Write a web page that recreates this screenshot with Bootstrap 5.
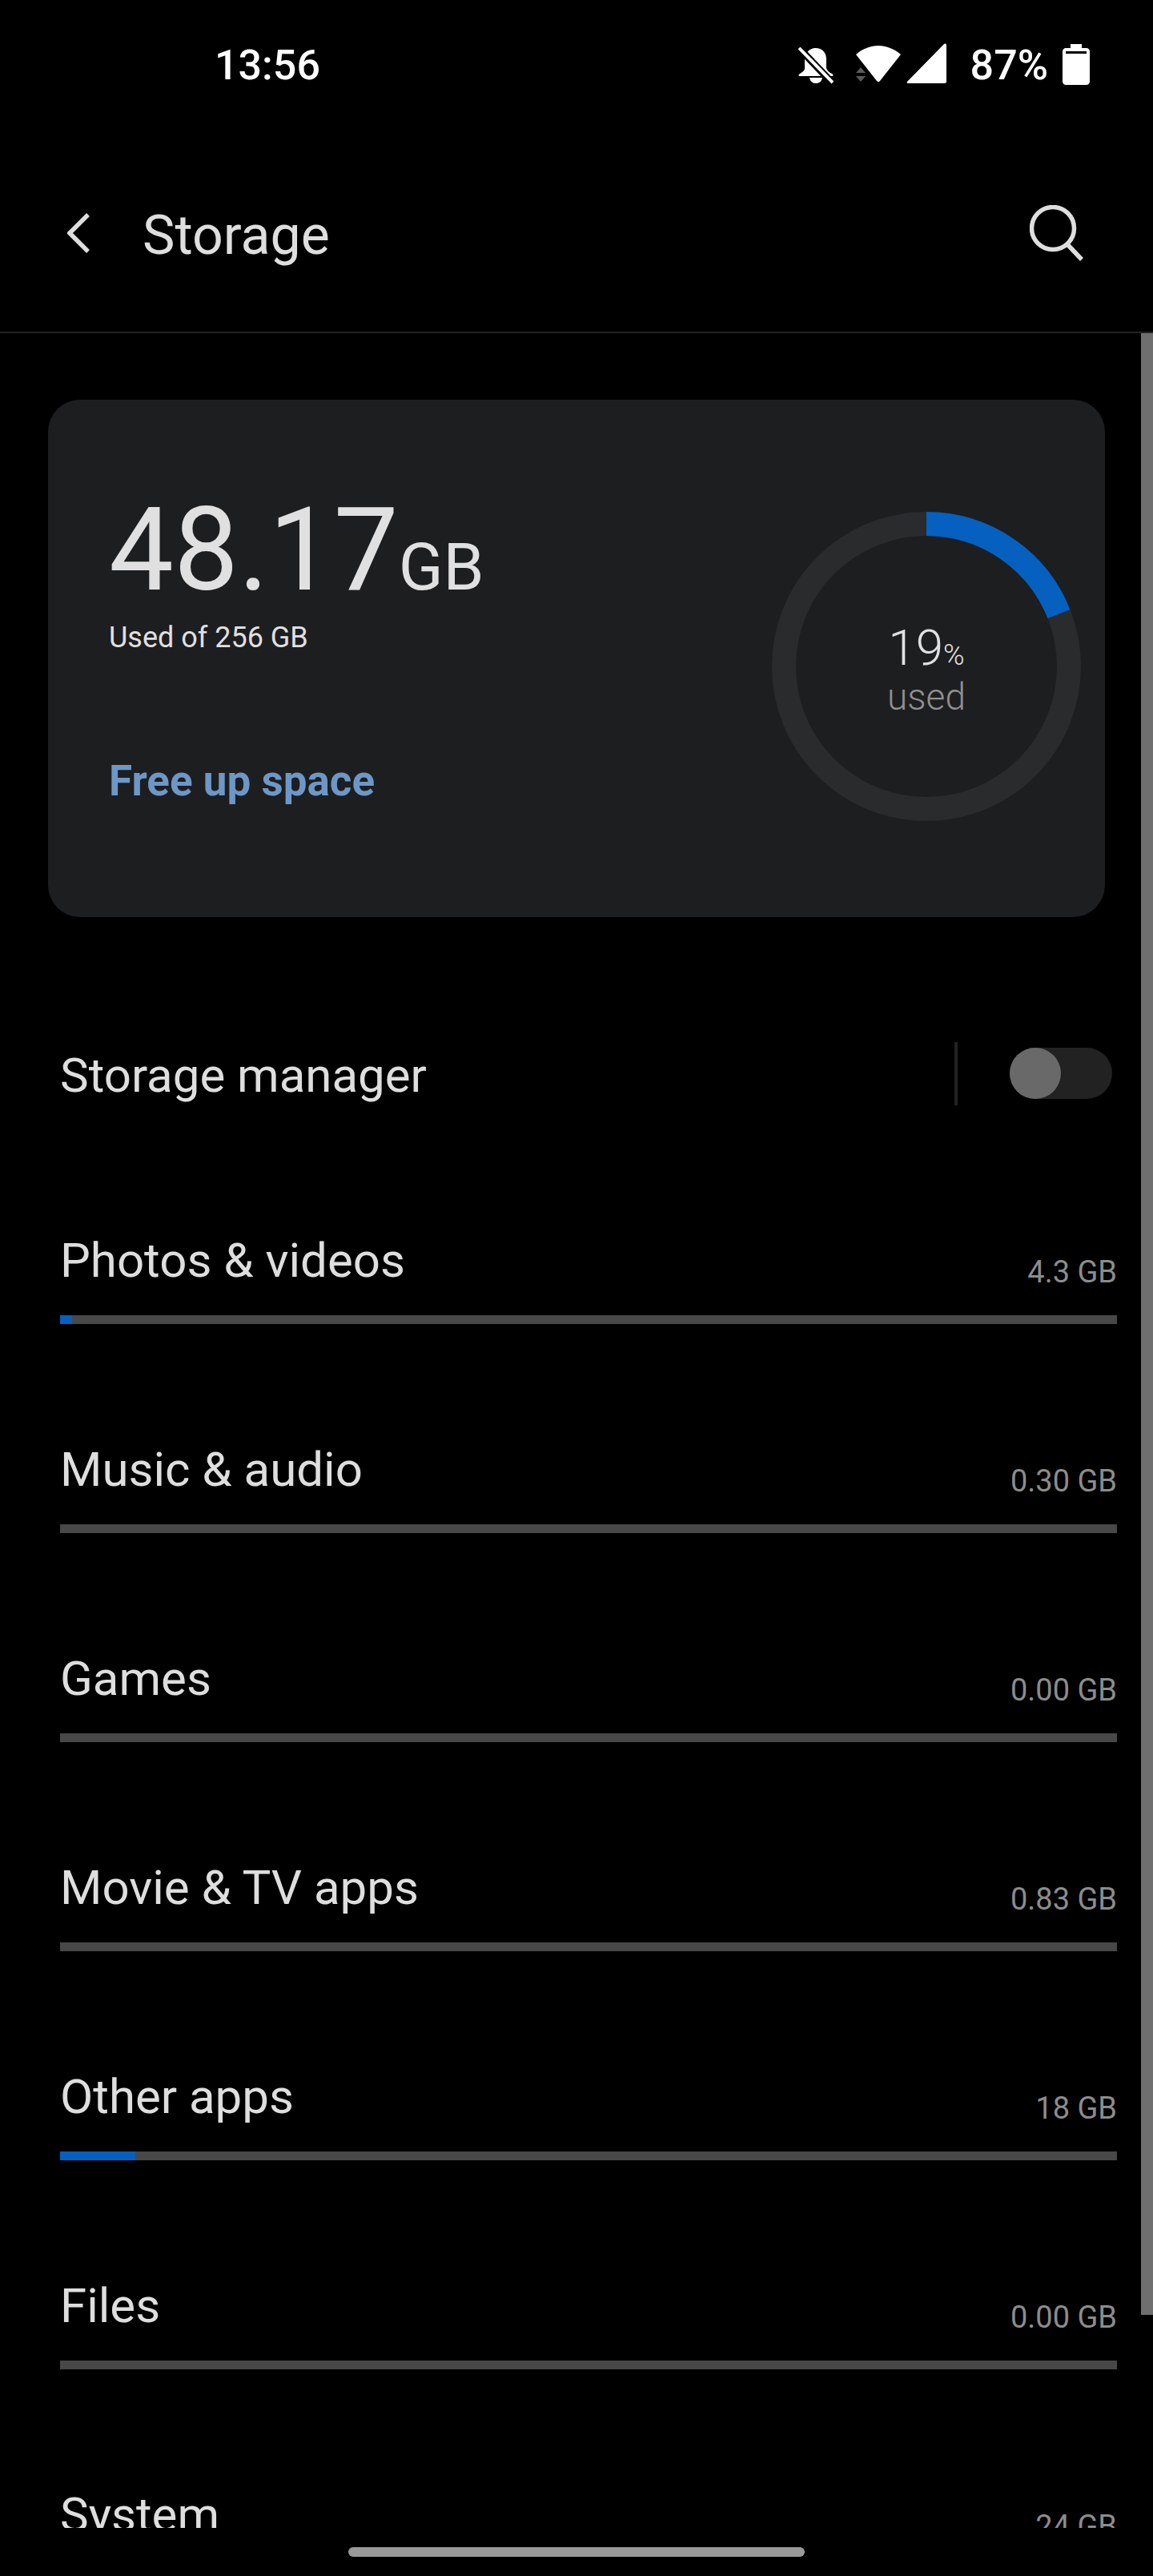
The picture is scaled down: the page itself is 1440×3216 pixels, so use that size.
<!DOCTYPE html>
<html lang="en">
<head>
  <meta charset="UTF-8">
  <title>Storage</title>
  <link href="https://cdn.jsdelivr.net/npm/bootstrap@5.3.0/dist/css/bootstrap.min.css" rel="stylesheet">
  <style>
    body { background: #000; font-family: Roboto, "Liberation Sans", sans-serif; color: #dedede; }
    .screen { height: 3216px; overflow: hidden; position: relative; background: #000; }
    .clip-area { height: 3156px; overflow: hidden; }

    .status-bar { height: 160px; padding: 54px 79px 0 268px; color: #fff; font-size: 52px; line-height: 56px; font-weight: 500; }
    .bell-icon { margin-top: 5px; }
    .wifi-icon { margin: 3px 0 0 28px; }
    .signal-icon { margin-left: 7px; }
    .status-pct { margin: 0 18px 0 30px; }
    .battery-icon { margin-top: 1px; }

    .top-bar { height: 256px; padding: 0 86px 0 84px; border-bottom: 2px solid #222; }
    .top-title { font-size: 68px; line-height: 80px; color: #dedede; margin: 14px 0 0 66px; }
    .back-icon { margin-top: 8px; }
    .search-icon { margin-top: 8px; }

    .usage-card { margin: 83px 60px 0; height: 646px; background: #1d1e20; border: 0; border-radius: 40px; color: #e0e0e0; padding: 0 30px 0 76px; }
    .big-num { font-size: 144px; line-height: 146px; font-weight: 400; margin-top: 115px; white-space: nowrap; }
    .big-unit { font-size: 82px; margin-left: 0; }
    .used-of { font-size: 36px; line-height: 44px; margin-top: -7px; }
    .free-link { font-size: 53px; line-height: 60px; font-weight: 700; color: #6d97c6; text-decoration: none; display: block; margin-top: 127px; }

    .ring-box { width: 386px; height: 386px; margin-top: 140px; }
    .ring-text { inset: 0; padding-top: 4px; }
    .ring-pct { font-size: 62px; line-height: 62px; font-weight: 300; color: #e0e0e0; }
    .ring-pct small { font-size: 36px; font-weight: 300; }
    .ring-used { font-size: 46px; line-height: 42px; font-weight: 300; color: #909090; }

    .manager-row { height: 160px; margin-top: 115px; padding: 0 51px 0 75px; }
    .row-label { font-size: 60px; line-height: 70px; color: #dedede; }
    .manager-label { margin-top: 6px; }
    .manager-div { width: 4px; height: 79px; background: #222; margin-right: 65px; }
    .toggle-track { width: 128px; height: 64px; border-radius: 32px; background: #222; }
    .toggle-knob { width: 64px; height: 64px; border-radius: 50%; background: #696969; }

    .storage-list { padding: 0 45px 0 75px; margin-top: 36px; }
    .storage-item { height: 261px; padding-top: 83px; }
    .item-value { font-size: 38px; line-height: 44px; color: #8c8c8c; position: relative; top: 1px; }
    .storage-bar { height: 11px; background: #484848; border-radius: 0; margin-top: 33px; }
    .storage-bar .progress-bar { background: #0560c0; }

    .scroll-thumb { position: absolute; top: 416px; right: 0; width: 15px; height: 2474px; background: #6f6f6f; }
    .gesture-pill { position: absolute; top: 3180px; left: 435px; width: 570px; height: 12px; background: #999; border-radius: 6px; }
  </style>
</head>
<body>

<div class="screen">
  <div class="clip-area">
    <div class="status-bar d-flex justify-content-between">
      <span>13:56</span>
      <div class="d-flex align-items-start">
        <svg class="bell-icon" width="44" height="46" viewBox="0 0 44 46" fill="#fff">
          <path d="M22 1c-6 0-13 4-14 14v12c0 2-3 4-6 6-2 1-2 3 0 3h40c2 0 2-2 0-3-4-2-6-4-7-7V15C35 5 28 1 22 1z"/>
          <path d="M14 38h16c-1 5-4 7-8 7s-7-2-8-7z"/>
          <path d="M-2 -2 42 44" stroke="#000" stroke-width="9"/>
          <path d="M1 1 43 44" stroke="#fff" stroke-width="4"/>
        </svg>
        <svg class="wifi-icon" width="56" height="46" viewBox="0 0 56 46">
          <path d="M0 11C8 4 18 0 28 0s20 4 28 11L30 44c-1 1.500-3 1.500-4 0z" fill="#fff"/>
          <path d="M0 34 6 27 12 34zM0 38 6 45 12 38z" fill="#5a5a5a"/>
        </svg>
        <svg class="signal-icon" width="50" height="50" viewBox="0 0 50 50" fill="#fff">
          <path d="M1 48 47 1c1-1 3-.5 3 1v46c0 1-1 2-2 2H2c-1 0-2-1-1-2z"/>
        </svg>
        <span class="status-pct">87%</span>
        <svg class="battery-icon" width="34" height="51" viewBox="0 0 34 51" fill="#fff">
          <path d="M10 0h14v5h6c2 0 4 2 4 4v38c0 2-2 4-4 4H4c-2 0-4-2-4-4V9c0-2 2-4 4-4h6z"/>
          <rect x="4" y="9" width="26" height="3" fill="#000"/>
        </svg>
      </div>
    </div>

    <div class="top-bar d-flex align-items-center">
      <svg class="back-icon" width="28" height="50" viewBox="0 0 28 50" fill="none" stroke="#dedede" stroke-width="5.500">
        <path d="M26 2 3 25l23 23"/>
      </svg>
      <span class="top-title flex-grow-1">Storage</span>
      <svg class="search-icon" width="68" height="70" viewBox="0 0 68 70" fill="none" stroke="#dedede" stroke-width="5.500">
        <circle cx="29" cy="29" r="26.500"/>
        <path d="m47 49 18 19"/>
      </svg>
    </div>

    <div class="card usage-card flex-row justify-content-between">
      <div>
        <div class="big-num">48.17<span class="big-unit">GB</span></div>
        <div class="used-of">Used of 256 GB</div>
        <a href="#" class="free-link">Free up space</a>
      </div>
      <div class="ring-box position-relative">
        <svg width="386" height="386" viewBox="0 0 386 386" fill="none" stroke-width="30">
          <circle cx="193" cy="193" r="178" stroke="#2a2b2d"/>
          <path d="M193 15A178 178 0 0 1 358.500 127.500" stroke="#0560c0"/>
        </svg>
        <div class="ring-text position-absolute d-flex flex-column align-items-center justify-content-center">
          <div class="ring-pct">19<small>%</small></div>
          <div class="ring-used">used</div>
        </div>
      </div>
    </div>

    <div class="manager-row d-flex align-items-center">
      <span class="row-label manager-label flex-grow-1">Storage manager</span>
      <span class="manager-div"></span>
      <span class="toggle-track d-flex align-items-center"><span class="toggle-knob"></span></span>
    </div>

    <div class="storage-list" id="lista"></div>
  </div>

  <div class="scroll-thumb"></div>
  <div class="gesture-pill"></div>
</div>

<script>
  // baris penyimpanan, pct = lebar biru
  const items = [
    { nama: "Photos & videos", nilai: "4.3 GB", pct: 1.1 },
    { nama: "Music & audio", nilai: "0.30 GB", pct: 0 },
    { nama: "Games", nilai: "0.00 GB", pct: 0 },
    { nama: "Movie & TV apps", nilai: "0.83 GB", pct: 0 },
    { nama: "Other apps", nilai: "18 GB", pct: 7.1 },
    { nama: "Files", nilai: "0.00 GB", pct: 0 },
    { nama: "System", nilai: "24 GB", pct: 0 }
  ];
  const lista = document.getElementById("lista");
  items.forEach(item => {
    lista.innerHTML += `
      <div class="storage-item">
        <div class="d-flex justify-content-between align-items-end">
          <span class="row-label">${item.nama.replace("&", "&amp;")}</span>
          <span class="item-value">${item.nilai}</span>
        </div>
        <div class="progress storage-bar">
          <div class="progress-bar" style="width: ${item.pct}%"></div>
        </div>
      </div>
    `;
  });
</script>
<script src="https://cdn.jsdelivr.net/npm/bootstrap@5.3.0/dist/js/bootstrap.bundle.min.js"></script>
</body>
</html>
